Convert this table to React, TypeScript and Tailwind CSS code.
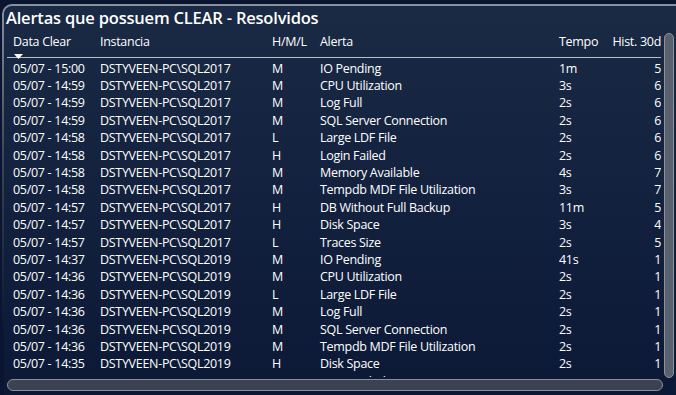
const rows: [string, string, string, string, string, string][] = [
  ['05/07 - 15:00', 'DSTYVEEN-PC\\SQL2017', 'M', 'IO Pending', '1m', '5'],
  ['05/07 - 14:59', 'DSTYVEEN-PC\\SQL2017', 'M', 'CPU Utilization', '3s', '6'],
  ['05/07 - 14:59', 'DSTYVEEN-PC\\SQL2017', 'M', 'Log Full', '2s', '6'],
  ['05/07 - 14:59', 'DSTYVEEN-PC\\SQL2017', 'M', 'SQL Server Connection', '2s', '6'],
  ['05/07 - 14:58', 'DSTYVEEN-PC\\SQL2017', 'L', 'Large LDF File', '2s', '6'],
  ['05/07 - 14:58', 'DSTYVEEN-PC\\SQL2017', 'H', 'Login Failed', '2s', '6'],
  ['05/07 - 14:58', 'DSTYVEEN-PC\\SQL2017', 'M', 'Memory Available', '4s', '7'],
  ['05/07 - 14:58', 'DSTYVEEN-PC\\SQL2017', 'M', 'Tempdb MDF File Utilization', '3s', '7'],
  ['05/07 - 14:57', 'DSTYVEEN-PC\\SQL2017', 'H', 'DB Without Full Backup', '11m', '5'],
  ['05/07 - 14:57', 'DSTYVEEN-PC\\SQL2017', 'H', 'Disk Space', '3s', '4'],
  ['05/07 - 14:57', 'DSTYVEEN-PC\\SQL2017', 'L', 'Traces Size', '2s', '5'],
  ['05/07 - 14:37', 'DSTYVEEN-PC\\SQL2019', 'M', 'IO Pending', '41s', '1'],
  ['05/07 - 14:36', 'DSTYVEEN-PC\\SQL2019', 'M', 'CPU Utilization', '2s', '1'],
  ['05/07 - 14:36', 'DSTYVEEN-PC\\SQL2019', 'L', 'Large LDF File', '2s', '1'],
  ['05/07 - 14:36', 'DSTYVEEN-PC\\SQL2019', 'M', 'Log Full', '2s', '1'],
  ['05/07 - 14:36', 'DSTYVEEN-PC\\SQL2019', 'M', 'SQL Server Connection', '2s', '1'],
  ['05/07 - 14:36', 'DSTYVEEN-PC\\SQL2019', 'M', 'Tempdb MDF File Utilization', '2s', '1'],
  ['05/07 - 14:35', 'DSTYVEEN-PC\\SQL2019', 'H', 'Disk Space', '2s', '1'],
  ['05/07 - 14:35', 'DSTYVEEN-PC\\SQL2019', 'H', 'Login Failed', '2s', '1'],
];

const cols = 'grid grid-cols-[87px_172px_48px_239px_45px_57px]';

export default function App() {
  return (
    <div className="h-[395px] w-[676px] overflow-hidden bg-[#0a1630] pl-[2px] pt-[4px] font-['Open_Sans',sans-serif] text-white">
      <div className="h-[391px] rounded-tl-[10px] bg-[linear-gradient(to_bottom,#8a92a0,#3a4458_40%,transparent_85%)] pl-[2px] pt-[2px]">
        <div className="h-full rounded-tl-[8px] bg-[linear-gradient(to_bottom,#1a2944,#0b1937)]">
          <div className="h-[24px] pl-[2px] text-[16.5px] font-semibold leading-[23px] tracking-[-0.2px]">
            Alertas que possuem CLEAR - Resolvidos
          </div>
          <div className="flex">
            <div className="ml-[3px] w-[654px]">
              <div className={`${cols} h-[28px] border-b border-[#b9bec7] pl-[6px] pt-[4px] text-[12.5px] leading-[16px] tracking-[-0.3px]`}>
                <div className="flex flex-col">
                  <span>Data Clear</span>
                  <svg width="9" height="5" viewBox="0 0 9 5" className="ml-[1px] mt-[4px]">
                    <path d="M0 0 H9 L4.5 5 Z" fill="#ffffff" />
                  </svg>
                </div>
                <span>Instancia</span>
                <span>H/M/L</span>
                <span>Alerta</span>
                <span>Tempo</span>
                <span className="whitespace-nowrap text-right">Hist. 30d</span>
              </div>
              <div className="h-[319px] overflow-hidden pl-[6px] pt-[1.5px] text-[12.5px] tracking-[-0.3px]">
                {rows.map((r, i) => (
                  <div key={i} className={`${cols} h-[17.4px] items-center leading-[17px]`}>
                    <span>{r[0]}</span>
                    <span>{r[1]}</span>
                    <span>{r[2]}</span>
                    <span>{r[3]}</span>
                    <span>{r[4]}</span>
                    <span className="text-right">{r[5]}</span>
                  </div>
                ))}
              </div>
            </div>
            <div className="ml-[3px] mt-[3px] h-[345px] w-[10px] rounded-full border border-[#8d939c] bg-[#5a616e]" />
          </div>
          <div className="ml-[3px] mt-[1px] h-[12px] w-[656px] rounded-full border border-[#8a9099] bg-[#3c4350]" />
        </div>
      </div>
    </div>
  );
}
